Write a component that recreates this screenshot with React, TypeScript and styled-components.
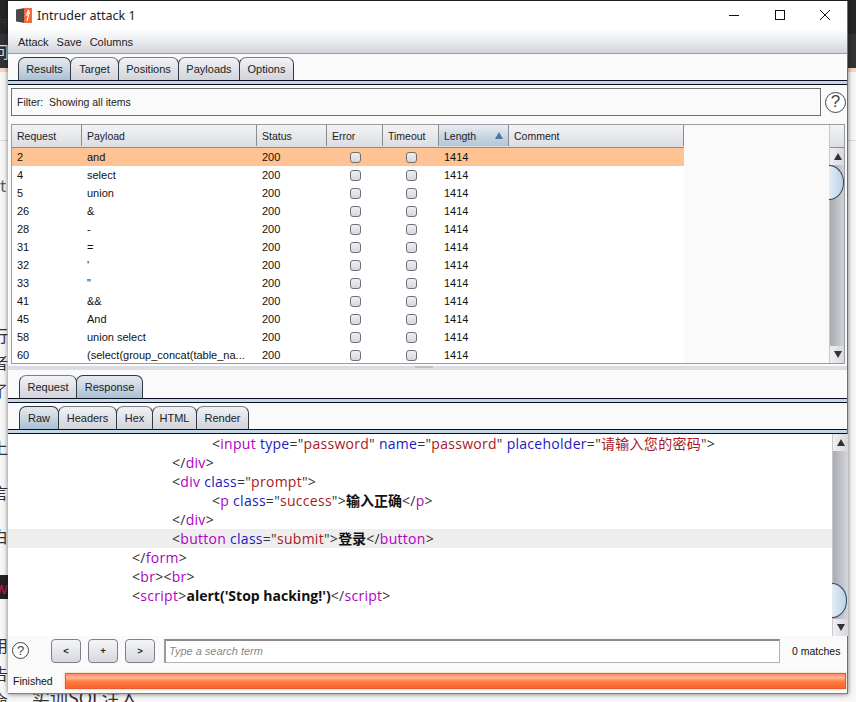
import React from "react";
import styled, { createGlobalStyle } from "styled-components";

const Global = createGlobalStyle`
  html, body { margin: 0; padding: 0; background: #f6f6f6; }
  body { width: 856px; height: 702px; overflow: hidden; font-family: "Liberation Sans", Arial, sans-serif; }
`;

const Desktop = styled.div`
  position: relative;
  width: 856px;
  height: 702px;
  overflow: hidden;
  background: #f7f7f7;
`;
const DarkBand = styled.div`
  position: absolute;
  left: 0;
  width: ${p => p.$w || 856}px;
  top: ${p => p.$top}px;
  height: ${p => p.$h}px;
  background: ${p => p.$bg};
`;
const Scrap = styled.span`
  position: absolute;
  left: ${p => p.$x}px;
  top: ${p => p.$y}px;
  font: ${p => p.$fs || 16}px "Noto Sans CJK SC", "Liberation Sans", sans-serif;
  line-height: 20px;
  color: ${p => p.$c || "#333"};
  white-space: nowrap;
`;

const Win = styled.div`
  position: absolute;
  left: 8px;
  top: 1px;
  width: 840px;
  height: 693px;
  background: #fafafa;
  box-shadow: 0 0 5px rgba(0,0,0,.55);
  border-right: 1px solid #707070;
  border-bottom: 1px solid #808080;
  box-sizing: border-box;
  display: flex;
  flex-direction: column;
`;
const TitleBar = styled.div`
  height: 30px;
  flex: none;
  box-sizing: border-box;
  padding: 0 0 2px 8px;
  background: #fff;
  display: flex;
  align-items: center;
  font: 12.5px "Noto Sans", sans-serif;
  color: #222;
`;
const TitleText = styled.span`
  margin-left: 5px;
  flex: 1;
`;
const WinBtn = styled.div`
  width: ${p => p.$w}px;
  height: 28px;
  display: flex;
  align-items: center;
  justify-content: center;
`;
const MenuBar = styled.div`
  height: 22px;
  flex: none;
  background: linear-gradient(#fbfbfc, #f1f2f4 30%, #d2d4da);
  border-bottom: 1px solid #9a9ca4;
  display: flex;
  align-items: center;
  gap: 8px;
  padding-left: 10px;
  font-size: 11px;
  color: #222;
`;
const TabStrip = styled.div`
  height: ${p => p.$h}px;
  flex: none;
  display: flex;
  align-items: flex-end;
  padding-left: ${p => p.$pad}px;
`;
const Tab = styled.div`
  width: ${p => p.$w}px;
  height: 23px;
  box-sizing: border-box;
  border: 1px solid #2f3a46;
  border-bottom: none;
  border-top-color: ${p => p.$on ? "#2f3a46" : "#7a808a"};
  border-radius: 7px 7px 0 0;
  margin-right: -1px;
  display: flex;
  align-items: center;
  justify-content: center;
  font-size: 11px;
  color: #222;
  background: ${p => p.$on
    ? "linear-gradient(#e4e9ef, #d3dce5 35%, #a9c0d5)"
    : "linear-gradient(#f2f3f5, #dfe1e6 55%, #d2d4da)"};
`;
const TabRule = styled.div`
  height: 5px;
  flex: none;
  box-sizing: border-box;
  background: #c5d6e6;
  border-top: 1px solid #0a0f1e;
  border-bottom: 1px solid #0a0f1e;
`;
const FilterRow = styled.div`
  flex: none;
  display: flex;
  align-items: center;
  height: 34px;
  padding-left: 3px;
  gap: 4px;
`;
const FilterBox = styled.div`
  width: 810px;
  height: 28px;
  flex: none;
  box-sizing: border-box;
  border: 1px solid #707070;
  display: flex;
  align-items: center;
  padding-left: 5px;
  font-size: 10.5px;
  color: #222;
  white-space: pre;
`;
const Help = styled.div`
  width: ${p => p.$s}px;
  height: ${p => p.$s}px;
  box-sizing: border-box;
  border: 1.2px solid #444;
  border-radius: 50%;
  background: #fff;
  color: #444;
  display: flex;
  align-items: center;
  justify-content: center;
  font: ${p => p.$f}px "Liberation Sans", sans-serif;
  flex: none;
`;
const TableFrame = styled.div`
  margin: 5px 2px 0 3px;
  height: 240px;
  flex: none;
  box-sizing: border-box;
  border: 1px solid #9a9ca4;
  display: flex;
  overflow: hidden;
`;
const TableCol = styled.div`
  width: 817px;
  flex: none;
  display: flex;
  flex-direction: column;
`;
const Row = styled.div`
  display: grid;
  grid-template-columns: 70px 175px 70px 56px 56px 70px 175px;
  width: 672px;
`;
const HeadRow = styled(Row)`
  height: 23px;
  padding-bottom: 1px;
  border-bottom: 1px solid #8a8c94;
  box-sizing: border-box;
  background: #dcdee3;
`;
const Head = styled.div`
  background: ${p => p.$on
    ? "linear-gradient(#e9edf1, #c5d3e0 60%, #b3c6d8)"
    : "linear-gradient(#f2f3f5, #dcdee3)"};
  border-right: 1px solid #8a8c94;
  display: flex;
  align-items: center;
  justify-content: space-between;
  padding: 0 5px;
  font-size: 10.5px;
  color: #222;
  box-sizing: border-box;
`;
const SortMark = styled.span`
  width: 0;
  height: 0;
  border-left: 4px solid transparent;
  border-right: 4px solid transparent;
  border-bottom: 7px solid #4a7aaa;
`;
const Body = styled.div`
  flex: 1;
  overflow: hidden;
`;
const DataRow = styled(Row)`
  height: 18px;
  background: ${p => p.$sel ? "#ffc293" : "#fff"};
  font-size: 11px;
  color: #111;
`;
const Cell = styled.div`
  padding-left: 5px;
  display: flex;
  align-items: center;
  white-space: nowrap;
`;
const CheckCell = styled.div`
  display: flex;
  align-items: center;
  justify-content: center;
`;
const Check = styled.span`
  width: 11px;
  height: 11px;
  box-sizing: border-box;
  border: 1px solid #6c7078;
  border-radius: 3px;
  background: linear-gradient(#eef0f2, #d4d7dc);
`;
const VScroll = styled.div`
  width: 15px;
  flex: none;
  background: linear-gradient(90deg, #a9abb2, #d4d6da);
  display: flex;
  flex-direction: column;
  border-left: 1px solid #c8c8cc;
`;
const ScrollHead = styled.div`
  height: 23px;
  flex: none;
  box-sizing: border-box;
  background: linear-gradient(#f2f3f5, #dcdee3);
  border-bottom: 1px solid #8a8c94;
`;
const ScrollBtn = styled.div`
  height: 17px;
  flex: none;
  background: linear-gradient(90deg, #f0f0f2, #d6d8dc);
  display: flex;
  align-items: center;
  justify-content: center;
`;
const Arrow = styled.span`
  width: 0;
  height: 0;
  border-left: 4px solid transparent;
  border-right: 4px solid transparent;
  ${p => p.$up ? "border-bottom: 7px solid #333;" : "border-top: 7px solid #333;"}
`;
const Track = styled.div`
  flex: 1;
  position: relative;
`;
const Thumb = styled.div`
  position: absolute;
  top: ${p => p.$top}px;
  left: -1px;
  width: 15px;
  height: 35px;
  box-sizing: border-box;
  border: 1px solid #2c4a68;
  border-left: none;
  border-radius: 0 15px 15px 0 / 0 17px 17px 0;
  background: linear-gradient(90deg, #e4edf4, #b9d2e6);
`;
const Splitter = styled.div`
  height: 4px;
  flex: none;
  margin-top: 2px;
  background: #dcdde4;
  display: flex;
  justify-content: center;
`;
const Grip = styled.div`
  width: 18px;
  height: 2px;
  background: #bfc1c9;
  margin-right: 8px;
`;
const Editor = styled.div`
  height: 202px;
  flex: none;
  background: #fff;
  display: flex;
`;
const Code = styled.div`
  width: 824px;
  flex: none;
`;
const Line = styled.div`
  height: 19px;
  padding-left: ${p => p.$indent}px;
  background: ${p => p.$hl ? "#eeeeee" : "transparent"};
  font: 14px/19px "Open Sans", "Noto Sans CJK SC", sans-serif;
  letter-spacing: .28px;
  white-space: pre;
  color: #333;
`;
const T = styled.span` color: #b000c0; `;
const A = styled.span` color: #1a1ac0; `;
const V = styled.span` color: #a81826; `;
const B = styled.b` color: #111; font-weight: 700; letter-spacing: 0; `;
const SearchRow = styled.div`
  height: 29px;
  flex: none;
  display: flex;
  align-items: center;
  padding-left: 4px;
`;
const NavBtn = styled.div`
  width: 30px;
  height: 24px;
  box-sizing: border-box;
  border: 1px solid #7c8088;
  border-radius: 4px;
  background: linear-gradient(#f6f6f8, #d6d8de);
  margin-right: 7px;
  display: flex;
  align-items: center;
  justify-content: center;
  font-size: 9.5px;
  font-weight: 700;
  color: #222;
`;
const NavGroup = styled.div`
  display: flex;
  margin-left: 22px;
  margin-right: 2px;
`;
const SearchInput = styled.div`
  width: 616px;
  height: 24px;
  box-sizing: border-box;
  border: 1px solid #b4b4b4;
  border-top: 2px solid #8a8a8a;
  border-left: 2px solid #9a9a9a;
  background: #fff;
  display: flex;
  align-items: center;
  padding-left: 3px;
  font: italic 11px "Liberation Sans", sans-serif;
  color: #888;
`;
const Matches = styled.div`
  margin-left: 12px;
  font-size: 10.5px;
  color: #111;
`;
const StatusRow = styled.div`
  flex: 1;
  display: flex;
  align-items: flex-start;
  padding: 8px 1px 0 5px;
`;
const StatusText = styled.div`
  width: 52px;
  font-size: 10.5px;
  color: #111;
  line-height: 16px;
`;
const Progress = styled.div`
  width: 781px;
  height: 16px;
  box-sizing: border-box;
  border: 1px solid #e85a30;
  box-shadow: 0 0 2px #ffb090;
  background: linear-gradient(#ff8a5c, #ffb89a 25%, #ff7a42 55%, #fc6228);
`;

const rows: [string, string][] = [
  ["2", "and"], ["4", "select"], ["5", "union"], ["26", "&"], ["28", "-"], ["31", "="],
  ["32", "'"], ["33", "\""], ["41", "&&"], ["45", "And"], ["58", "union select"],
  ["60", "(select(group_concat(table_na..."],
];

export default function App() {
  return (
    <Desktop>
      <Global />
      <DarkBand $top={0} $h={34} $bg="#262626" />
      <DarkBand $top={34} $h={34} $bg="#333" />
      <DarkBand $top={68} $h={4} $bg="#f6d3c4" />
      <DarkBand $top={140} $h={1} $bg="#ddd" />
      <DarkBand $top={575} $h={24} $w={8} $bg="#26221f" />
      <Scrap $x={-6} $y={10}>ve</Scrap>
      <Scrap $x={-7} $y={41} $c="#ddd">问</Scrap>
      <Scrap $x={-8} $y={175} $c="#555">ct</Scrap>
      <Scrap $x={-8} $y={325}>行</Scrap>
      <Scrap $x={-8} $y={352}>者</Scrap>
      <Scrap $x={-8} $y={380}>了</Scrap>
      <Scrap $x={-8} $y={437}>上</Scrap>
      <Scrap $x={-8} $y={482}>言</Scrap>
      <Scrap $x={-8} $y={526}>白</Scrap>
      <Scrap $x={-5} $y={577} $c="#c2185b">w</Scrap>
      <Scrap $x={-8} $y={635}>用</Scrap>
      <Scrap $x={-8} $y={663}>告</Scrap>
      <Scrap $x={-8} $y={690}>命</Scrap>
      <Scrap $x={32} $y={687} $fs={18}>实训SQL注入</Scrap>

      <Win>
        <TitleBar>
          <svg width="16" height="15" viewBox="0 0 16 15">
            <path d="M0 1.5 L9 0 V15 L0 13.5 Z" fill="#4a4a4a" />
            <path d="M8 0 H16 V15 H8 Z" fill="#f26a35" />
            <path d="M12.6 2 L10.4 7 H12.6 L10.8 13 M12.6 2 L13.4 5.5 H11.8" stroke="#fff" strokeWidth="1.1" fill="none" />
          </svg>
          <TitleText>Intruder attack 1</TitleText>
          <WinBtn $w={45}>
            <svg width="12" height="12" viewBox="0 0 12 12"><path d="M1 6.5H11" stroke="#111" /></svg>
          </WinBtn>
          <WinBtn $w={47}>
            <svg width="12" height="12" viewBox="0 0 12 12"><rect x="1.5" y="1.5" width="9" height="9" fill="none" stroke="#111" /></svg>
          </WinBtn>
          <WinBtn $w={44}>
            <svg width="12" height="12" viewBox="0 0 12 12"><path d="M1 1L11 11M11 1L1 11" stroke="#111" /></svg>
          </WinBtn>
        </TitleBar>
        <MenuBar>
          <span>Attack</span><span>Save</span><span>Columns</span>
        </MenuBar>
        <TabStrip $h={26} $pad={10}>
          <Tab $w={53} $on>Results</Tab>
          <Tab $w={49}>Target</Tab>
          <Tab $w={61}>Positions</Tab>
          <Tab $w={62}>Payloads</Tab>
          <Tab $w={55}>Options</Tab>
        </TabStrip>
        <TabRule />
        <FilterRow>
          <FilterBox>Filter:  Showing all items</FilterBox>
          <Help $s={21} $f={17}>?</Help>
        </FilterRow>
        <TableFrame>
          <TableCol>
            <HeadRow>
              <Head>Request</Head>
              <Head>Payload</Head>
              <Head>Status</Head>
              <Head>Error</Head>
              <Head>Timeout</Head>
              <Head $on>Length<SortMark /></Head>
              <Head>Comment</Head>
            </HeadRow>
            <Body>
              {rows.map(([n, p], i) => (
                <DataRow key={n} $sel={i === 0}>
                  <Cell>{n}</Cell>
                  <Cell>{p}</Cell>
                  <Cell>200</Cell>
                  <CheckCell><Check /></CheckCell>
                  <CheckCell><Check /></CheckCell>
                  <Cell>1414</Cell>
                  <Cell />
                </DataRow>
              ))}
            </Body>
          </TableCol>
          <VScroll>
            <ScrollHead />
            <ScrollBtn><Arrow $up /></ScrollBtn>
            <Track><Thumb $top={0} /></Track>
            <ScrollBtn><Arrow /></ScrollBtn>
          </VScroll>
        </TableFrame>
        <Splitter><Grip /></Splitter>
        <TabStrip $h={28} $pad={11}>
          <Tab $w={58}>Request</Tab>
          <Tab $w={67} $on>Response</Tab>
        </TabStrip>
        <TabRule />
        <TabStrip $h={26} $pad={11}>
          <Tab $w={40} $on>Raw</Tab>
          <Tab $w={59}>Headers</Tab>
          <Tab $w={37}>Hex</Tab>
          <Tab $w={45}>HTML</Tab>
          <Tab $w={53}>Render</Tab>
        </TabStrip>
        <TabRule />
        <Editor>
          <Code>
            <Line $indent={204}>&lt;<T>input</T> <A>type</A>="<V>password</V>" <A>name</A>="<V>password</V>" <A>placeholder</A>="<V>请输入您的密码</V>"&gt;</Line>
            <Line $indent={164}>&lt;/<T>div</T>&gt;</Line>
            <Line $indent={164}>&lt;<T>div</T> <A>class</A>="<V>prompt</V>"&gt;</Line>
            <Line $indent={204}>&lt;<T>p</T> <A>class</A>="<V>success</V>"&gt;<B>输入正确</B>&lt;/<T>p</T>&gt;</Line>
            <Line $indent={164}>&lt;/<T>div</T>&gt;</Line>
            <Line $indent={164} $hl>&lt;<T>button</T> <A>class</A>="<V>submit</V>"&gt;<B>登录</B>&lt;/<T>button</T>&gt;</Line>
            <Line $indent={124}>&lt;/<T>form</T>&gt;</Line>
            <Line $indent={124}>&lt;<T>br</T>&gt;&lt;<T>br</T>&gt;</Line>
            <Line $indent={124}>&lt;<T>script</T>&gt;<B>alert('Stop hacking!')</B>&lt;/<T>script</T>&gt;</Line>
          </Code>
          <VScroll>
            <ScrollBtn><Arrow $up /></ScrollBtn>
            <Track><Thumb $top={132} /></Track>
            <ScrollBtn><Arrow /></ScrollBtn>
          </VScroll>
        </Editor>
        <SearchRow>
          <Help $s={17} $f={13}>?</Help>
          <NavGroup>
            <NavBtn>&lt;</NavBtn>
            <NavBtn>+</NavBtn>
            <NavBtn>&gt;</NavBtn>
          </NavGroup>
          <SearchInput>Type a search term</SearchInput>
          <Matches>0 matches</Matches>
        </SearchRow>
        <StatusRow>
          <StatusText>Finished</StatusText>
          <Progress />
        </StatusRow>
      </Win>
    </Desktop>
  );
}
